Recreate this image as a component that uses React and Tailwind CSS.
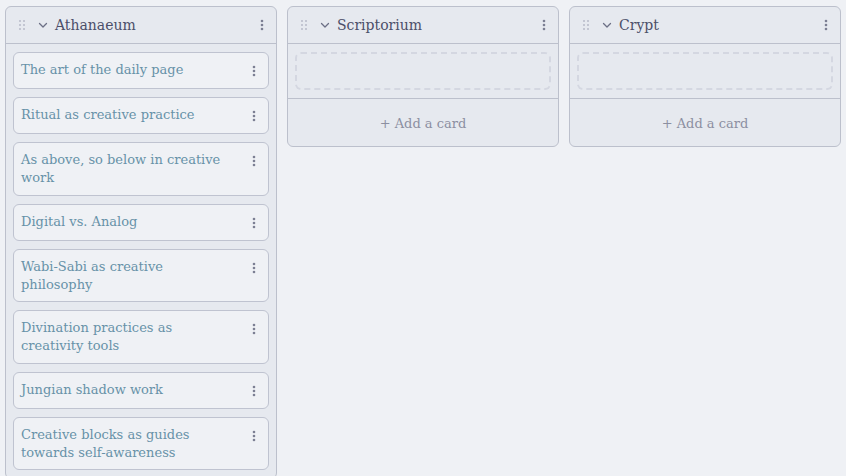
import React from "react";

const serif = { fontFamily: '"DejaVu Serif", "Liberation Serif", serif' };

function Grip() {
  return (
    <svg width="8" height="12" viewBox="0 0 8 12" className="shrink-0">
      {[0, 1, 2].map((r) =>
        [0, 1].map((c) => (
          <rect key={`${r}-${c}`} x={1 + c * 4} y={1 + r * 4} width="2" height="2" fill="#c3c6d2" />
        ))
      )}
    </svg>
  );
}

function Chevron() {
  return (
    <svg width="12" height="12" viewBox="0 0 12 12" className="shrink-0">
      <path d="M2.5 4.5 L6 8 L9.5 4.5" fill="none" stroke="#6c6f85" strokeWidth="1.3" strokeLinecap="round" strokeLinejoin="round" />
    </svg>
  );
}

function Kebab() {
  return (
    <svg width="4" height="12" viewBox="0 0 4 12" className="shrink-0">
      <circle cx="2" cy="2" r="1.3" fill="#7c7f93" />
      <circle cx="2" cy="6" r="1.3" fill="#7c7f93" />
      <circle cx="2" cy="10" r="1.3" fill="#7c7f93" />
    </svg>
  );
}

function Header({ title }) {
  return (
    <div className="flex h-[37px] items-center border-b border-[#bcc0cc] pl-[12px] pr-[12px]">
      <Grip />
      <div className="ml-[11px]">
        <Chevron />
      </div>
      <div className="ml-[6px] flex-1 text-[14px] text-[#4c4f69]" style={serif}>
        {title}
      </div>
      <Kebab />
    </div>
  );
}

function Card({ text }) {
  return (
    <div className="flex items-start rounded-[6px] border border-[#bfc3d0] bg-[#eff1f5] pt-[8px] pb-[7px] pl-[7px] pr-[12px]">
      <div className="flex-1 pr-[18px] text-[13px] leading-[18.25px] text-[#6791a8]" style={serif}>
        {text}
      </div>
      <div className="flex h-[20px] items-center">
        <Kebab />
      </div>
    </div>
  );
}

function EmptyColumn({ title }) {
  return (
    <div className="w-[272px] shrink-0 self-start rounded-[6px] border border-[#bcc0cc] bg-[#e6e9ef]">
      <Header title={title} />
      <div className="border-b border-[#bcc0cc] px-[7px] pt-[8px] pb-[8px]">
        <div className="h-[38px] rounded-[6px] border-2 border-dashed border-[#d4d7e1]" />
      </div>
      <div className="flex h-[47px] items-center justify-center pt-[2px] text-[13px] text-[#8c8fa1]" style={serif}>
        + Add a card
      </div>
    </div>
  );
}

const cards = [
  "The art of the daily page",
  "Ritual as creative practice",
  "As above, so below in creative work",
  "Digital vs. Analog",
  "Wabi-Sabi as creative philosophy",
  "Divination practices as creativity tools",
  "Jungian shadow work",
  "Creative blocks as guides towards self-awareness",
];

export default function App() {
  return (
    <div className="h-[476px] w-[846px] overflow-hidden bg-[#eff1f5]">
      <div className="flex gap-[10px] pl-[5px] pt-[6px]">
        <div className="w-[272px] shrink-0 self-start rounded-[6px] border border-[#bcc0cc] bg-[#e6e9ef]">
          <Header title="Athanaeum" />
          <div className="flex flex-col gap-[8px] px-[7px] py-[8px]">
            {cards.map((c) => (
              <Card key={c} text={c} />
            ))}
          </div>
        </div>
        <EmptyColumn title="Scriptorium" />
        <EmptyColumn title="Crypt" />
      </div>
    </div>
  );
}
